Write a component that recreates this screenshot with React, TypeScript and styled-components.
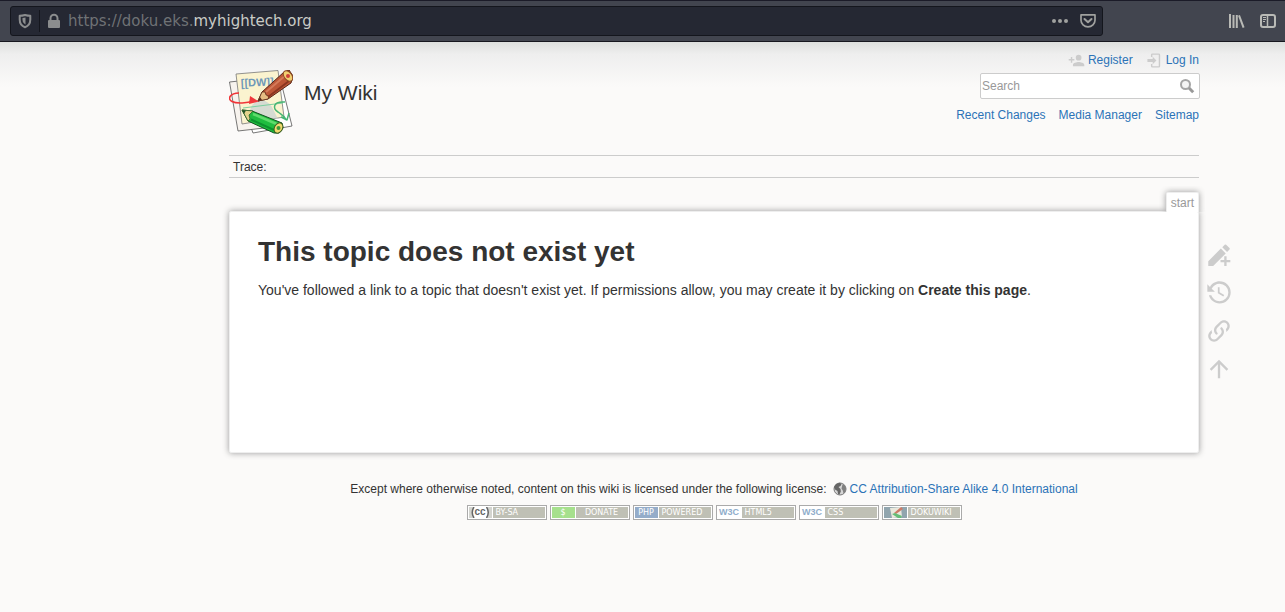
import React from 'react';
import styled, { createGlobalStyle } from 'styled-components';

const GlobalStyle = createGlobalStyle`
  * { box-sizing: border-box; }
  body {
    margin: 0;
    background: #fbfaf9;
    color: #333;
    font: 14px/20px "Liberation Sans", Arial, sans-serif;
  }
`;

/* ---------- browser chrome ---------- */

const BrowserBar = styled.div`
  display: flex;
  align-items: center;
  height: 42px;
  padding: 0 8px 0 10px;
  background: #42454f;
  border-top: 1px solid #1b1b28;
  border-bottom: 1px solid #16171e;
`;

const AddressBar = styled.div`
  display: flex;
  flex: 1;
  align-items: center;
  height: 30px;
  padding: 0 5px 0 6px;
  background: #252833;
  border: 1px solid #14161d;
  border-radius: 3px;
`;

const BarDivider = styled.span`
  width: 1px;
  height: 22px;
  margin: 0 6px;
  background: #14161d;
`;

const Address = styled.div`
  flex: 1;
  margin-left: 6px;
  color: #6f7275;
  font: 15px/20px "DejaVu Sans", sans-serif;
`;

const Domain = styled.span`
  color: #c9cbc6;
`;

const IconButton = styled.button`
  display: flex;
  padding: 0;
  border: 0;
  background: none;
  cursor: pointer;
  color: ${(p) => p.color};
`;

const AddressActions = styled.div`
  display: flex;
  gap: 10px;
`;

const WindowActions = styled.div`
  display: flex;
  gap: 14px;
  margin-left: 125px;
`;

/* ---------- wiki page ---------- */

const Page = styled.div`
  padding: 8px 86px 24px 229px;
  background: linear-gradient(to bottom, #dddfdd 0, #eeeeee 12px, #fbfaf9 45px);
`;

const Header = styled.header`
  display: flex;
  justify-content: space-between;
  height: 105px;
`;

const Brand = styled.a`
  display: flex;
  gap: 11px;
  padding-top: 20px;
  color: #333;
  font-size: 21px;
  line-height: 46px;
  text-decoration: none;
`;

const HeaderTools = styled.div`
  display: flex;
  flex-direction: column;
  align-items: flex-end;
`;

const LinkRow = styled.nav`
  display: flex;
  gap: 13px;
  font-size: 12px;
  line-height: 20px;
`;

const TextLink = styled.a`
  display: inline-flex;
  align-items: center;
  gap: 3px;
  color: #2b73b7;
  text-decoration: none;
`;

const LinkIcon = styled.span`
  display: flex;
  color: #ccc;
`;

const SearchForm = styled.form`
  display: flex;
  align-items: center;
  width: 220px;
  height: 26px;
  margin: 3px -1px 6px 0;
  padding: 0 4px 0 1px;
  background: #fff;
  border: 1px solid #ccc;
  border-radius: 2px;
`;

const SearchInput = styled.input`
  flex: 1;
  min-width: 0;
  padding: 0;
  border: 0;
  outline: 0;
  background: none;
  color: #333;
  font: 12px/20px "Liberation Sans", Arial, sans-serif;
  &::placeholder { color: #999; opacity: 1; }
`;

const Trace = styled.div`
  height: 23px;
  padding-left: 4px;
  border-top: 1px solid #ccc;
  border-bottom: 1px solid #ccc;
  font-size: 12px;
  line-height: 22px;
`;

const Content = styled.div`
  position: relative;
  margin-top: 14px;
`;

const TabRow = styled.div`
  position: relative;
  display: flex;
  justify-content: flex-end;
  box-sizing: content-box;
  height: 20px;
  margin: -6px -6px -1px 0;
  padding: 6px 6px 0 0;
  overflow: hidden;
`;

const PageTab = styled.div`
  padding: 0 4px;
  background: #fff;
  border: 1px solid #eee;
  border-bottom: 0;
  border-radius: 2px 2px 0 0;
  box-shadow: 0 0 6px #999;
  color: #999;
  font-size: 12px;
  line-height: 20px;
`;

const Article = styled.main`
  min-height: 242px;
  padding: 22px 28px;
  background: #fff;
  border: 1px solid #eee;
  border-radius: 2px;
  box-shadow: 0 0 6px #999;
`;

const Title = styled.h1`
  margin: 0 0 10px;
  font-size: 28px;
  line-height: 36px;
`;

const Paragraph = styled.p`
  margin: 0;
`;

const PageTools = styled.nav`
  position: absolute;
  top: 55px;
  left: calc(100% + 6px);
  display: flex;
  flex-direction: column;
  gap: 10px;
`;

const ToolLink = styled.a`
  display: flex;
  color: #ccc;
`;

const Footer = styled.footer`
  margin-top: 26px;
  font-size: 12px;
  text-align: center;
`;

const License = styled.div`
  display: flex;
  justify-content: center;
  gap: 6px;
`;

const Badges = styled.div`
  display: flex;
  justify-content: center;
  gap: 3px;
  margin-top: 6px;
`;

const Badge = styled.a`
  display: flex;
  width: 80px;
  height: 15px;
  padding: 1px;
  background: #fff;
  border: 1px solid #aaa;
  color: #fff;
  font: 8px/11px "DejaVu Sans", sans-serif;
  text-decoration: none;
`;

const BadgeMark = styled.span<{ $bg: string; $ink?: string }>`
  display: flex;
  flex: none;
  align-items: center;
  justify-content: center;
  width: 23px;
  margin-right: 1px;
  background: ${(p) => p.$bg};
  color: ${(p) => p.$ink || '#fff'};
`;

const BadgeLabel = styled.span<{ $center?: boolean }>`
  flex: 1;
  padding: 0 3px;
  background: #bfc0b5;
  text-align: ${(p) => (p.$center ? 'center' : 'left')};
`;

const MarkText = styled.span`
  font: bold 9px/11px "Liberation Sans", Arial, sans-serif;
`;

/* ---------- drawings ---------- */

const Glyph = ({ d, size }: { d: string; size: number }) => (
  <svg width={size} height={size} viewBox="0 0 24 24" fill="currentColor" aria-hidden="true">
    <path d={d} />
  </svg>
);

const accountPlus =
  'M15,14C12.33,14 7,15.33 7,18V20H23V18C23,15.33 17.67,14 15,14M6,10V7H4V10H1V12H4V15H6V12H9V10M15,12A4,4 0 0,0 19,8A4,4 0 0,0 15,4A4,4 0 0,0 11,8A4,4 0 0,0 15,12Z';
const login =
  'M9 2H18Q20 2 20 4V20Q20 22 18 22H9Q7 22 7 20V17H9V20H18V4H9V7H7V4Q7 2 9 2ZM9.500 6.800L14.700 12L9.500 17.200V14H2V10H9.500Z';
const pencilPlus =
  'M2.8 21.4V17.3L13.6 6.5L17.8 10.7L7 21.4ZM14.8 5.3L16.9 3.2Q17.5 2.7 18.1 3.2L21 6.1Q21.5 6.7 21 7.3L18.9 9.4ZM16.5 13H18.5V16.2H21.7V18.2H18.5V21.4H16.5V18.2H13.3V16.2H16.5Z';
const history =
  'M11 7v5.11l4.71 2.79.79-1.28-4-2.37V7M12.5 2C8.97 2 5.91 3.92 4.27 6.77L2 4.5V11h6.5L5.75 8.25C6.96 5.73 9.5 4 12.5 4a7.5 7.5 0 0 1 7.5 7.5 7.5 7.5 0 0 1-7.5 7.5c-3.27 0-6.03-2.09-7.06-5h-2.1c1.1 4.03 4.77 7 9.16 7 5.24 0 9.5-4.25 9.5-9.5A9.5 9.5 0 0 0 12.5 2z';
const chain =
  'M10.59,13.41C11,13.8 11,14.44 10.59,14.83C10.2,15.22 9.56,15.22 9.17,14.83C7.22,12.88 7.22,9.71 9.17,7.76L12.71,4.22C14.66,2.27 17.83,2.27 19.78,4.22C21.73,6.17 21.73,9.34 19.78,11.29L18.29,12.78C18.3,11.96 18.17,11.14 17.89,10.36L18.36,9.88C19.54,8.71 19.54,6.81 18.36,5.64C17.19,4.46 15.29,4.46 14.12,5.64L10.59,9.17C9.41,10.34 9.41,12.24 10.59,13.41M13.41,9.17C13.8,8.78 14.44,8.78 14.83,9.17C16.78,11.12 16.78,14.29 14.83,16.24L11.29,19.78C9.34,21.73 6.17,21.73 4.22,19.78C2.27,17.83 2.27,14.66 4.22,12.71L5.71,11.22C5.7,12.04 5.83,12.86 6.11,13.65L5.64,14.12C4.46,15.29 4.46,17.19 5.64,18.36C6.81,19.54 8.71,19.54 9.88,18.36L13.41,14.83C14.59,13.66 14.59,11.76 13.41,10.59C13,10.2 13,9.56 13.41,9.17Z';
const arrowUp = 'M13,20H11V8L5.5,13.5L4.08,12.08L12,4.16L19.92,12.08L18.5,13.5L13,8V20Z';

const Shield = () => (
  <svg width="16" height="16" viewBox="0 0 16 16" fill="none" aria-hidden="true">
    <path d="M8 2C9.800 2.500 11.700 2.800 13.300 2.800V6.500C13.300 10.400 11 13.200 8 14.200C5 13.200 2.700 10.400 2.700 6.500V2.800C4.300 2.800 6.200 2.500 8 2Z" stroke="currentColor" strokeWidth="2" strokeLinejoin="round" />
    <path d="M8.500 4.500V11.500C6.500 10.500 5.500 9 5.500 6.800V5Z" fill="currentColor" />
  </svg>
);

const Lock = () => (
  <svg width="16" height="16" viewBox="0 0 16 16" aria-hidden="true">
    <path d="M4.500 8V5.200A3.500 3.500 0 0 1 11.500 5.200V8" fill="none" stroke="#8b8d8e" strokeWidth="2" />
    <rect x="2" y="7" width="12" height="8" rx="1" fill="#8b8d8e" />
  </svg>
);

const Pocket = () => (
  <svg width="18" height="16" viewBox="0 0 18 16" fill="none" stroke="currentColor" strokeLinejoin="round" strokeLinecap="round" aria-hidden="true">
    <path d="M2 1.900H16V7.300A7 6.600 0 0 1 2 7.300Z" strokeWidth="1.700" />
    <path d="M5.500 6L9 9.300L12.500 6" strokeWidth="2" />
  </svg>
);

const Dots = () => (
  <svg width="18" height="16" viewBox="0 0 18 16" fill="currentColor" aria-hidden="true">
    <circle cx="3" cy="8" r="2" />
    <circle cx="9" cy="8" r="2" />
    <circle cx="15" cy="8" r="2" />
  </svg>
);

const Library = () => (
  <svg width="17" height="16" viewBox="0 0 17 16" stroke="currentColor" strokeWidth="2" aria-hidden="true">
    <path d="M2 1V15M5.500 2V15M8.800 2V15M11 2.300L15.600 14.700" />
  </svg>
);

const Sidebar = () => (
  <svg width="18" height="16" viewBox="0 0 18 16" fill="none" stroke="currentColor" aria-hidden="true">
    <rect x="2" y="2" width="14" height="12" rx="2" strokeWidth="2" />
    <path d="M8.500 2V14" strokeWidth="1.500" />
    <path d="M4 4.500H7M4 6.500H7M4 8.500H6" />
  </svg>
);

const Magnifier = () => (
  <svg width="16" height="16" viewBox="0 0 16 16" fill="none" aria-hidden="true">
    <circle cx="6.500" cy="6.500" r="4.500" stroke="#a5a5a5" strokeWidth="2" fill="#f4f4f4" />
    <path d="M10 10L14.200 14.200" stroke="#999" strokeWidth="3" />
  </svg>
);

const Globe = () => (
  <svg width="14" height="14" viewBox="0 0 14 14" aria-hidden="true">
    <circle cx="7" cy="7" r="6" fill="#d6d6d6" stroke="#777" />
    <path d="M1 5L3 2L6.500 .8L8.500 2L7.500 4L5.500 5L7.500 7L7.800 9.500L6.500 12.500L5 12L4.500 9L2 7.500Z" fill="#666" />
    <path d="M9.500 2.200L11.500 3L13 6.500L12 10.500L10.500 11.500L9.800 8.500L8.500 6.500L9 4.500Z" fill="#808080" />
  </svg>
);

const WikiLogo = () => (
  <svg width="64" height="64" viewBox="0 0 64 64" aria-label="DokuWiki" role="img">
    <g strokeLinejoin="round">
      <path d="M22 11L51 8L63 56L24 63L20 52Z" fill="#fff" stroke="#555" strokeWidth=".8" />
      <path d="M.5 12L38 8L44 57L9 61Z" fill="#f7f3ee" stroke="#555" strokeWidth=".8" />
      <path d="M7 4L49 .5L55 47L13 54Z" fill="#fbf3cf" stroke="#777" strokeWidth=".8" />
      <text x="12" y="17" fontFamily="Liberation Sans, Arial, sans-serif" fontWeight="bold" fontSize="11" fill="#6f98b8" transform="rotate(-3 12 17)">[[DW]]</text>
      <path d="M21 40Q24 30 33 30Q41 32 44 39L49 49L27 46Z" fill="#c9d3d3" opacity=".75" />
      <path d="M10 23C1 23-2 29 3 31.500C8 34 18 33 25 31" fill="none" stroke="#f03538" strokeWidth="1.600" />
      <path d="M21 26L30 31.500L20 34Z" fill="#f0363a" />
      <path d="M14 38L54 33" stroke="#7bcf9e" strokeWidth="1" fill="none" />
      <path d="M56 32C43 31 44 39 49 42C53 45 56 46 57 50M52 47L58 50L60 43" stroke="#47b574" strokeWidth="1.500" fill="none" />
      <path d="M29 31L33 22L55 2L60 0L64 6L62 13L39 29Z" fill="#bd5737" stroke="#572516" strokeWidth="1" />
      <path d="M33 22L36 22L37 25L40 26L39 29L29 31Z" fill="#e6bd83" stroke="#572516" strokeWidth=".7" />
      <path d="M29 31L31 27L33 30Z" fill="#5a2b1b" />
      <path d="M37 22L57 5" stroke="#d57a59" strokeWidth="2" />
      <path d="M39 27L60 11" stroke="#8c3620" strokeWidth="2" />
      <ellipse cx="59" cy="6" rx="3.800" ry="6" transform="rotate(-38 59 6)" fill="#f2cf71" stroke="#8d4c25" />
      <circle cx="59" cy="6" r="2" fill="#cf3f38" />
      <path d="M13 40L23 41L53 53L54 58L50 63L45 63L19 51Z" fill="#20bd3f" stroke="#11541e" strokeWidth="1" />
      <path d="M13 40L24 41L20 45L21 49L19 51Z" fill="#e5d38d" stroke="#34602b" strokeWidth=".8" />
      <path d="M13 40L17 40.500L15 44Z" fill="#245126" />
      <path d="M24 44L50 55" stroke="#5fdc6c" strokeWidth="2.500" />
      <path d="M22 49.500L45 60" stroke="#0d932e" strokeWidth="2" />
      <ellipse cx="49.500" cy="58" rx="4" ry="5.500" transform="rotate(30 49.500 58)" fill="#f2d96f" stroke="#385f20" />
      <circle cx="49.500" cy="58" r="2" fill="#3d9b36" />
    </g>
  </svg>
);

const TinyLogo = () => (
  <svg width="23" height="11" viewBox="0 0 23 11" aria-hidden="true">
    <path d="M6 1L17 0L18 10L8 11Z" fill="#e9e8dd" />
    <path d="M10 6L17 0L19 2L12 7Z" fill="#cc7b67" />
    <path d="M8 7L11 6L18 9L17 11H14Z" fill="#65bd77" />
  </svg>
);

const CcMark = () => (
  <svg width="23" height="11" viewBox="0 0 23 11" aria-hidden="true">
    <path d="M5 0H18Q21 5.500 18 11H5Q2 5.500 5 0Z" fill="#fff" />
    <path d="M5 0Q1.500 5.500 5 11M17.500 0Q21 5.500 17.500 11" fill="none" stroke="#666" strokeWidth="1.500" />
    <text x="11" y="8" textAnchor="middle" fontFamily="Liberation Sans, Arial, sans-serif" fontWeight="bold" fontSize="10" fill="#666">cc</text>
  </svg>
);

const pageTools = [
  { label: 'Create this page', d: pencilPlus },
  { label: 'Old revisions', d: history },
  { label: 'Backlinks', d: chain },
  { label: 'Back to top', d: arrowUp },
];

const badges = [
  { label: 'BY-SA', bg: '#d3d4cf', mark: <CcMark /> },
  { label: 'DONATE', bg: '#a6e08d', mark: '$', center: true },
  { label: 'POWERED', bg: '#94acc9', mark: 'PHP' },
  { label: 'HTML5', bg: '#fff', ink: '#8fadcb', mark: <MarkText>W3C</MarkText> },
  { label: 'CSS', bg: '#fff', ink: '#8fadcb', mark: <MarkText>W3C</MarkText> },
  { label: 'DOKUWIKI', bg: '#91a5ae', mark: <TinyLogo /> },
];

export default function App() {
  return (
    <>
      <GlobalStyle />
      <BrowserBar>
        <AddressBar>
          <IconButton color="#8b8d8e" aria-label="Tracking protection"><Shield /></IconButton>
          <BarDivider />
          <Lock />
          <Address>https://doku.eks.<Domain>myhightech.org</Domain></Address>
          <AddressActions>
            <IconButton color="#a0a19f" aria-label="Page actions"><Dots /></IconButton>
            <IconButton color="#a0a19f" aria-label="Save to Pocket"><Pocket /></IconButton>
          </AddressActions>
        </AddressBar>
        <WindowActions>
          <IconButton color="#b9bab6" aria-label="Library"><Library /></IconButton>
          <IconButton color="#b9bab6" aria-label="Sidebars"><Sidebar /></IconButton>
        </WindowActions>
      </BrowserBar>
      <Page>
        <Header>
          <Brand href="#"><WikiLogo />My Wiki</Brand>
          <HeaderTools>
            <LinkRow aria-label="User tools">
              <TextLink href="#register"><LinkIcon><Glyph d={accountPlus} size={17} /></LinkIcon>Register</TextLink>
              <TextLink href="#login"><LinkIcon><Glyph d={login} size={17} /></LinkIcon>Log In</TextLink>
            </LinkRow>
            <SearchForm role="search">
              <SearchInput type="text" placeholder="Search" aria-label="Search" />
              <IconButton type="submit" color="#999" aria-label="Submit search"><Magnifier /></IconButton>
            </SearchForm>
            <LinkRow aria-label="Site tools">
              <TextLink href="#recent">Recent Changes</TextLink>
              <TextLink href="#media">Media Manager</TextLink>
              <TextLink href="#sitemap">Sitemap</TextLink>
            </LinkRow>
          </HeaderTools>
        </Header>
        <Trace>Trace:</Trace>
        <Content>
          <TabRow><PageTab>start</PageTab></TabRow>
          <Article>
            <Title>This topic does not exist yet</Title>
            <Paragraph>
              You've followed a link to a topic that doesn't exist yet. If permissions allow, you may create it by clicking on <strong>Create this page</strong>.
            </Paragraph>
          </Article>
          <PageTools aria-label="Page tools">
            {pageTools.map((t) => (
              <ToolLink key={t.label} href="#" aria-label={t.label}><Glyph d={t.d} size={28} /></ToolLink>
            ))}
          </PageTools>
        </Content>
        <Footer>
          <License>
            Except where otherwise noted, content on this wiki is licensed under the following license:
            <TextLink href="#license"><Globe />CC Attribution-Share Alike 4.0 International</TextLink>
          </License>
          <Badges>
            {badges.map((b) => (
              <Badge key={b.label} href="#">
                <BadgeMark $bg={b.bg} $ink={b.ink}>{b.mark}</BadgeMark>
                <BadgeLabel $center={b.center}>{b.label}</BadgeLabel>
              </Badge>
            ))}
          </Badges>
        </Footer>
      </Page>
    </>
  );
}
